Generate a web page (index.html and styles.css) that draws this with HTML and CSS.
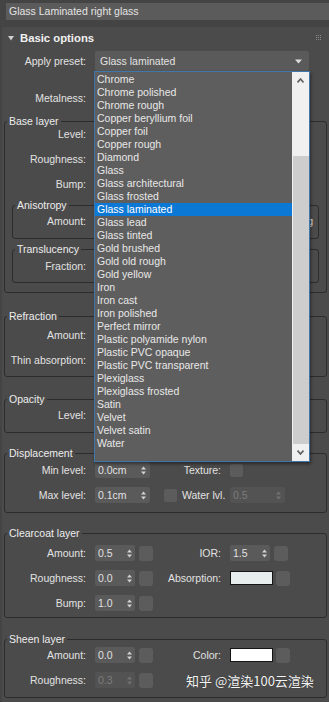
FILE: index.html
```html
<!DOCTYPE html>
<html lang="en">
<head>
    <meta charset="UTF-8">
    <meta name="viewport" content="width=device-width, initial-scale=1.0">
    <title>Physical Material - Basic options</title>
    <link rel="stylesheet" href="styles.css">
</head>
<body>
    <div class="name-bar">
        <div class="name-field">Glass Laminated right glass</div>
    </div>

    <div class="rollout">
        <div class="rollout-head">
            <svg class="twisty" width="6" height="5" viewBox="0 0 6 5"><polygon points="0,0 6,0 3,4.5" fill="#cfcfcf"/></svg>
            <span class="rollout-title">Basic options</span>
            <svg class="grip" width="5" height="5" viewBox="0 0 5 5" fill="#8a8a8a">
                <rect x="0" y="0" width="1" height="1"/><rect x="2" y="0" width="1" height="1"/><rect x="4" y="0" width="1" height="1"/>
                <rect x="0" y="2" width="1" height="1"/><rect x="2" y="2" width="1" height="1"/><rect x="4" y="2" width="1" height="1"/>
                <rect x="0" y="4" width="1" height="1"/><rect x="2" y="4" width="1" height="1"/><rect x="4" y="4" width="1" height="1"/>
            </svg>
        </div>

        <div class="row preset-row">
            <span class="lbl">Apply preset:</span>
            <div class="combo">
                <span>Glass laminated</span>
                <svg class="combo-arrow" width="7" height="5" viewBox="0 0 7 5"><polygon points="0,0.5 7,0.5 3.5,4.5" fill="#dcdcdc"/></svg>

                <div class="dropdown">
                    <ul class="options">
                        <li>Chrome</li>
                        <li>Chrome polished</li>
                        <li>Chrome rough</li>
                        <li>Copper beryllium foil</li>
                        <li>Copper foil</li>
                        <li>Copper rough</li>
                        <li>Diamond</li>
                        <li>Glass</li>
                        <li>Glass architectural</li>
                        <li>Glass frosted</li>
                        <li class="selected">Glass laminated</li>
                        <li>Glass lead</li>
                        <li>Glass tinted</li>
                        <li>Gold brushed</li>
                        <li>Gold old rough</li>
                        <li>Gold yellow</li>
                        <li>Iron</li>
                        <li>Iron cast</li>
                        <li>Iron polished</li>
                        <li>Perfect mirror</li>
                        <li>Plastic polyamide nylon</li>
                        <li>Plastic PVC opaque</li>
                        <li>Plastic PVC transparent</li>
                        <li>Plexiglass</li>
                        <li>Plexiglass frosted</li>
                        <li>Satin</li>
                        <li>Velvet</li>
                        <li>Velvet satin</li>
                        <li>Water</li>
                    </ul>
                    <div class="scrollbar">
                        <div class="sb-btn">
                            <svg width="7" height="5" viewBox="0 0 7 5"><polyline points="0.5,4.5 3.5,1 6.5,4.5" fill="none" stroke="#5e5e5e" stroke-width="1.6"/></svg>
                        </div>
                        <div class="sb-track"><div class="sb-thumb"></div></div>
                        <div class="sb-btn">
                            <svg width="7" height="5" viewBox="0 0 7 5"><polyline points="0.5,0.5 3.5,4 6.5,0.5" fill="none" stroke="#5e5e5e" stroke-width="1.6"/></svg>
                        </div>
                    </div>
                </div>
            </div>
        </div>

        <!-- rows below sit under the open preset list, so their fields stay empty -->
        <div class="row metal-row">
            <span class="lbl">Metalness:</span>
            <span class="spin w40"></span>
        </div>

        <fieldset class="group base">
            <legend>Base layer</legend>
            <div class="row"><span class="lbl">Level:</span><span class="spin w40"></span></div>
            <div class="row"><span class="lbl">Roughness:</span><span class="spin w40"></span></div>
            <div class="row"><span class="lbl">Bump:</span><span class="spin w40"></span></div>

            <fieldset class="group sub aniso">
                <legend>Anisotropy</legend>
                <div class="row">
                    <span class="lbl">Amount:</span>
                    <span class="spin w40"></span>
                    <span class="unit">deg</span>
                </div>
            </fieldset>

            <fieldset class="group sub transl">
                <legend>Translucency</legend>
                <div class="row"><span class="lbl">Fraction:</span><span class="spin w40"></span></div>
            </fieldset>
        </fieldset>

        <fieldset class="group refr">
            <legend>Refraction</legend>
            <div class="row"><span class="lbl">Amount:</span><span class="spin w40"></span></div>
            <div class="row"><span class="lbl">Thin absorption:</span><span class="spin w40"></span></div>
        </fieldset>

        <fieldset class="group opac">
            <legend>Opacity</legend>
            <div class="row"><span class="lbl">Level:</span><span class="spin w40"></span></div>
        </fieldset>

        <fieldset class="group disp">
            <legend>Displacement</legend>
            <div class="row">
                <span class="lbl">Min level:</span>
                <div class="cell">
                    <span class="spin w55"><span class="val">0.0cm</span>
                        <svg class="arrows" width="5" height="9" viewBox="0 0 5 9"><polygon points="0,3.5 2.5,0.5 5,3.5"/><polygon points="0,5.5 5,5.5 2.5,8.5"/></svg>
                    </span>
                </div>
                <span class="lbl2">Texture:</span>
                <span class="check"></span>
            </div>
            <div class="row">
                <span class="lbl">Max level:</span>
                <div class="cell">
                    <span class="spin w55"><span class="val">0.1cm</span>
                        <svg class="arrows" width="5" height="9" viewBox="0 0 5 9"><polygon points="0,3.5 2.5,0.5 5,3.5"/><polygon points="0,5.5 5,5.5 2.5,8.5"/></svg>
                    </span>
                </div>
                <span class="lbl2 water"><span class="check"></span>Water lvl.</span>
                <span class="spin w55 disabled"><span class="val">0.5</span>
                    <svg class="arrows" width="5" height="9" viewBox="0 0 5 9"><polygon points="0,3.5 2.5,0.5 5,3.5"/><polygon points="0,5.5 5,5.5 2.5,8.5"/></svg>
                </span>
            </div>
        </fieldset>

        <fieldset class="group clear">
            <legend>Clearcoat layer</legend>
            <div class="row">
                <span class="lbl">Amount:</span>
                <div class="cell">
                    <span class="spin w40"><span class="val">0.5</span>
                        <svg class="arrows" width="5" height="9" viewBox="0 0 5 9"><polygon points="0,3.5 2.5,0.5 5,3.5"/><polygon points="0,5.5 5,5.5 2.5,8.5"/></svg>
                    </span>
                    <span class="mapbtn"></span>
                </div>
                <span class="lbl2">IOR:</span>
                <span class="spin w40"><span class="val">1.5</span>
                    <svg class="arrows" width="5" height="9" viewBox="0 0 5 9"><polygon points="0,3.5 2.5,0.5 5,3.5"/><polygon points="0,5.5 5,5.5 2.5,8.5"/></svg>
                </span>
                <span class="mapbtn"></span>
            </div>
            <div class="row">
                <span class="lbl">Roughness:</span>
                <div class="cell">
                    <span class="spin w40"><span class="val">0.0</span>
                        <svg class="arrows" width="5" height="9" viewBox="0 0 5 9"><polygon points="0,3.5 2.5,0.5 5,3.5"/><polygon points="0,5.5 5,5.5 2.5,8.5"/></svg>
                    </span>
                    <span class="mapbtn"></span>
                </div>
                <span class="lbl2">Absorption:</span>
                <span class="swatch absorb"></span>
                <span class="mapbtn"></span>
            </div>
            <div class="row">
                <span class="lbl">Bump:</span>
                <div class="cell">
                    <span class="spin w40"><span class="val">1.0</span>
                        <svg class="arrows" width="5" height="9" viewBox="0 0 5 9"><polygon points="0,3.5 2.5,0.5 5,3.5"/><polygon points="0,5.5 5,5.5 2.5,8.5"/></svg>
                    </span>
                    <span class="mapbtn"></span>
                </div>
            </div>
        </fieldset>

        <fieldset class="group sheen">
            <legend>Sheen layer</legend>
            <div class="row">
                <span class="lbl">Amount:</span>
                <div class="cell">
                    <span class="spin w40"><span class="val">0.0</span>
                        <svg class="arrows" width="5" height="9" viewBox="0 0 5 9"><polygon points="0,3.5 2.5,0.5 5,3.5"/><polygon points="0,5.5 5,5.5 2.5,8.5"/></svg>
                    </span>
                    <span class="mapbtn"></span>
                </div>
                <span class="lbl2">Color:</span>
                <span class="swatch white"></span>
                <span class="mapbtn"></span>
            </div>
            <div class="row">
                <span class="lbl">Roughness:</span>
                <div class="cell">
                    <span class="spin w40 disabled"><span class="val">0.3</span>
                        <svg class="arrows" width="5" height="9" viewBox="0 0 5 9"><polygon points="0,3.5 2.5,0.5 5,3.5"/><polygon points="0,5.5 5,5.5 2.5,8.5"/></svg>
                    </span>
                    <span class="mapbtn"></span>
                </div>
            </div>
        </fieldset>
    </div>

    <div class="watermark">知乎 @渲染100云渲染</div>
</body>
</html>
```

FILE: styles.css
```css
body {
    margin: 0;
    background-color: #444444;
    color: #e2e2e2;
    font-family: "Liberation Sans", Arial, sans-serif;
    font-size: 10.5px;
    height: 702px;
    overflow: hidden;
    position: relative;
}

.name-bar {
    padding: 3px 0 0 6px;
}

.name-field {
    height: 17px;
    line-height: 17px;
    padding-left: 3px;
    background-color: #5b5b5b;
    color: #e4e4e4;
}

.rollout {
    margin: 7px 0 0 2px;
    padding: 0 2px 0 2px;
    background-color: #4b4b4b;
    height: 675px;
    box-sizing: border-box;
}

.rollout-head {
    display: flex;
    align-items: center;
    height: 22px;
}

.twisty {
    margin-left: 4px;
    margin-right: 6px;
}

.rollout-title {
    font-weight: bold;
    font-size: 11.3px;
    color: #f0f0f0;
}

.grip {
    margin-left: auto;
    margin-right: 6px;
    margin-top: -1px;
}

/* rows */
.row {
    display: flex;
    align-items: center;
    height: 16px;
    line-height: 13px;
    margin-top: 9px;
    white-space: nowrap;
}

.lbl {
    flex: none;
    width: 82px;
    margin-right: 9px;
    text-align: right;
}

.group .lbl {
    width: 81px;
}

.sub .lbl {
    width: 73px;
}

.lbl2 {
    flex: none;
    width: 57px;
    margin-right: 9px;
    text-align: right;
}

.cell {
    flex: none;
    width: 69px;
    display: flex;
    align-items: center;
}

.preset-row {
    height: 20px;
    margin-top: 2px;
}

.metal-row {
    margin-top: 19px;
}

/* combo + dropdown */
.combo {
    position: relative;
    flex: none;
    width: 214px;
    height: 20px;
    box-sizing: border-box;
    padding-left: 5px;
    display: flex;
    align-items: center;
    background-color: #5a5a5a;
    border-radius: 2px;
}

.combo-arrow {
    margin-left: auto;
    margin-right: 7px;
}

.dropdown {
    position: absolute;
    top: 20px;
    left: -1px;
    width: 216px;
    height: 391px;
    box-sizing: border-box;
    display: flex;
    background-color: #5e5e5e;
    border: 1px solid #3f77ab;
    box-shadow: 1px 2px 3px rgba(0, 0, 0, 0.45);
    z-index: 5;
}

.options {
    flex: 1;
    list-style: none;
    margin: 0;
    padding: 1px 0 0 0;
    color: #e8e8e8;
}

.options li {
    height: 13px;
    line-height: 13px;
    padding-left: 2px;
}

.options li.selected {
    background-color: #0c78d5;
    color: #ffffff;
}

.scrollbar {
    flex: none;
    width: 17px;
    display: flex;
    flex-direction: column;
    background-color: #f0f0f0;
}

.sb-btn {
    height: 17px;
    display: flex;
    align-items: center;
    justify-content: center;
}

.sb-track {
    flex: 1;
}

.sb-thumb {
    margin: 67px 0 0 1px;
    height: 288px;
    background-color: #cdcdcd;
}

/* groups */
.group {
    margin: 0;
    padding: 0;
    min-width: 0;
    border: 1px solid #2c2c2c;
    border-radius: 3px;
}

.group legend {
    margin-left: 2px;
    padding: 0 2px;
    line-height: 10px;
    color: #ededed;
}

.group > .row:first-of-type {
    margin-top: 0;
}

.base { margin-top: 10px; padding-bottom: 9px; }
.aniso { margin: 8px 7px 0 7px; padding: 3px 0 9px 0; }
.transl { margin: 5px 7px 0 7px; padding: 4px 0 8px 0; }
.refr { margin-top: 18px; padding: 6px 0 8px 0; }
.opac { margin-top: 17px; padding: 3px 0 9px 0; }
.disp { margin-top: 15px; padding: 4px 0 9px 0; }
.clear { margin-top: 15px; padding: 7px 0 6px 0; }
.sheen { margin-top: 16px; padding: 3px 0 9px 0; }

.unit {
    margin-left: auto;
    margin-right: 5px;
}

/* controls */
.spin {
    flex: none;
    display: flex;
    align-items: center;
    height: 16px;
    box-sizing: border-box;
    padding-left: 3px;
    background-color: #5a5a5a;
    border-radius: 2px;
    color: #e0e0e0;
}

.spin.w40 { width: 40px; }
.spin.w55 { width: 55px; }

.spin .arrows {
    margin-left: auto;
    margin-right: 3px;
    fill: #d2d2d2;
}

.spin.w55 .arrows {
    margin-right: 4px;
}

.spin.disabled {
    background-color: #535353;
    color: #7c7c7c;
}

.spin.disabled .arrows {
    fill: #737373;
}

.mapbtn {
    flex: none;
    width: 14px;
    height: 15px;
    margin-left: 4px;
    background-color: #5c5c5c;
    border-radius: 3px;
}

.check {
    flex: none;
    width: 13px;
    height: 13px;
    background-color: #5c5c5c;
    border-radius: 2px;
}

.water {
    display: flex;
    align-items: center;
    text-align: left;
}

.water .check {
    margin-right: 5px;
}

.swatch {
    flex: none;
    width: 43px;
    height: 14px;
    box-sizing: border-box;
    border: 1px solid #151515;
}

.swatch + .mapbtn {
    margin-left: 3px;
}

.swatch.absorb { background-color: #e6edec; }
.swatch.white { background-color: #ffffff; }

.watermark {
    position: absolute;
    left: 186px;
    top: 672px;
    font-family: "Noto Sans CJK SC", "Noto Sans", sans-serif;
    font-size: 13px;
    line-height: 18px;
    color: #f4f4f4;
    text-shadow: 0 0 1px rgba(0, 0, 0, 0.5);
    white-space: nowrap;
}
```
